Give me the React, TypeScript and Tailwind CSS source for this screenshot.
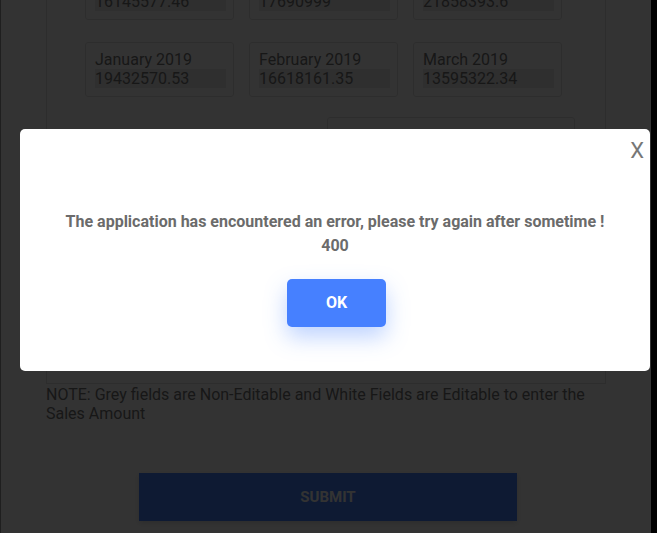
const font = "font-[Roboto,'Liberation_Sans',sans-serif]";

const rows = [
  [
    { label: "October 2018", value: "16145577.46" },
    { label: "November 2018", value: "17690999" },
    { label: "December 2018", value: "21858393.6" },
  ],
  [
    { label: "January 2019", value: "19432570.53" },
    { label: "February 2019", value: "16618161.35" },
    { label: "March 2019", value: "13595322.34" },
  ],
];

function MonthCell({ label, value }: { label: string; value: string }) {
  return (
    <div className="border border-[#e2e2e2] rounded-[3px] pt-[7px] pb-[8px] pl-[9px] pr-[7px] text-[16px] leading-[19px] text-[#757575]">
      <div>{label}</div>
      <div className="bg-[#e8e8e8]">{value}</div>
    </div>
  );
}

export default function App() {
  return (
    <div className={`relative h-[533px] w-[657px] overflow-hidden flex bg-white ${font}`}>
      {/* page behind the dialog */}
      <div className="flex-1 border-l border-[#999]">
        <div className="-mt-[60px]">
          <div className="ml-[45px] w-[560px] border border-[#e2e2e2] pt-[24px] pb-[36px]">
            <div className="ml-[38px] flex flex-col gap-[22px]">
              {rows.map((row, i) => (
                <div key={i} className="grid grid-cols-[149px_149px_149px] gap-[15px]">
                  {row.map((c) => (
                    <MonthCell key={c.label} {...c} />
                  ))}
                </div>
              ))}
            </div>
            <div className="mt-[20px] ml-[280px] w-[248px] h-[230px] border border-[#e2e2e2] rounded-[3px]" />
          </div>
          <p className="ml-[45px] w-[560px] text-[16px] leading-[19px] text-[#757575] pt-[1px]">
            NOTE: Grey fields are Non-Editable and White Fields are Editable to enter the Sales Amount
          </p>
          <button className="mt-[50px] ml-[138px] w-[378px] h-[48px] bg-[#4680ff] text-white font-bold text-[15px] uppercase shadow-[0_2px_6px_rgba(0,0,0,0.15)]">
            Submit
          </button>
        </div>
      </div>
      <div className="w-[6px] bg-black" />

      {/* dim layer */}
      <div className="absolute inset-0 bg-black/80" />

      {/* error dialog */}
      <div className="absolute left-[20px] top-[129px] w-[630px] h-[242px] bg-white rounded-[5px] flex flex-col items-center">
        <button className="absolute right-[6px] top-[9px] text-[22px] leading-[26px] font-normal text-[#777]">X</button>
        <div className="mt-[81px] text-center font-bold text-[16px] leading-[24px] text-[#6b6b6b]">
          <p>The application has encountered an error, please try again after sometime !</p>
          <p>400</p>
        </div>
        <button className="mt-[21px] ml-[3px] w-[99px] h-[48px] rounded-[5px] bg-[#4680ff] text-white font-bold text-[16px] shadow-[0_10px_22px_rgba(70,128,255,0.35)]">
          OK
        </button>
      </div>
    </div>
  );
}
